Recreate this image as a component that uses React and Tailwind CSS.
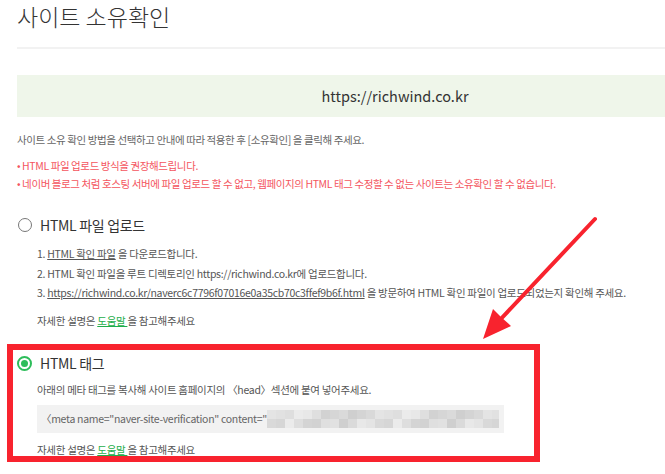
import React from 'react';

const mosaicTones = [
  'bg-[#e4e4e4]', 'bg-[#d6d6d6]', 'bg-[#dedede]', 'bg-[#cfcfcf]', 'bg-[#e8e8e8]', 'bg-[#d9d9d9]',
  'bg-[#d2d2d2]', 'bg-[#e1e1e1]', 'bg-[#dadada]', 'bg-[#ebebeb]', 'bg-[#d4d4d4]', 'bg-[#dfdfdf]',
];

function Mosaic() {
  const rows = [0, 1];
  const cols = Array.from({ length: 28 }, (_, i) => i);
  return (
    <div className="flex flex-col flex-1 min-w-0 mr-[5px] h-[18px] overflow-hidden">
      {rows.map((r) => (
        <div key={r} className="flex h-[9px]">
          {cols.map((c) => (
            <div key={c} className={`w-[9px] h-[9px] shrink-0 ${mosaicTones[(c * 7 + r * 5 + (c % 3) * r) % mosaicTones.length]}`} />
          ))}
        </div>
      ))}
    </div>
  );
}

function HelpLine() {
  return (
    <p className="text-[10.5px] text-[#555]">
      자세한 설명은 <span className="text-[#1fae4b] underline">도움말 </span>을 참고해주세요
    </p>
  );
}

function App() {
  return (
    <div className="relative w-[665px] h-[474px] overflow-hidden bg-white text-[#333] font-['Noto_Sans_CJK_KR','Noto_Sans',sans-serif]">
      <h1 className="pl-[17px] pt-[1px] text-[23px] leading-[30px] font-light text-[#333]">
        사이트 소유확인
      </h1>
      <div className="ml-[17px] mt-[16px] h-[2px] bg-[#f2f2f2]" />

      <div className="ml-[17px] mt-[26px] w-[756px] h-[42px] bg-[#eff6ea] flex items-center justify-center text-[14.5px] text-[#333]">
        https://richwind.co.kr
      </div>

      <div className="pl-[17px] mt-[15px] text-[10.5px] leading-[16px] tracking-[-0.4px]">
        <p className="text-[#666]">사이트 소유 확인 방법을 선택하고 안내에 따라 적용한 후 [소유확인] 을 클릭해 주세요.</p>
        <p className="mt-[10px] text-[#f4555e]">• HTML 파일 업로드 방식을 권장해드립니다.</p>
        <p className="mt-[2px] text-[#f4555e]">• 네이버 블로그 처럼 호스팅 서버에 파일 업로드 할 수 없고, 웹페이지의 HTML 태그 수정할 수 없는 사이트는 소유확인 할 수 없습니다.</p>
      </div>

      <div className="pl-[18px] mt-[23px] flex items-center gap-[8px] h-[20px]">
        <span className="w-[14px] h-[14px] rounded-full border-[1.5px] border-[#777]" />
        <span className="text-[14px] text-[#333] tracking-[-0.3px]">HTML 파일 업로드</span>
      </div>

      <ol className="pl-[37px] mt-[9px] text-[10.5px] leading-[19.5px] text-[#555] tracking-[-0.3px]">
        <li>1. <span className="underline">HTML 확인 파일</span> 을 다운로드합니다.</li>
        <li>2. HTML 확인 파일을 루트 디렉토리인 https://richwind.co.kr에 업로드합니다.</li>
        <li>3. <span className="underline">https://richwind.co.kr/naverc6c7796f07016e0a35cb70c3ffef9b6f.html</span> 을 방문하여 HTML 확인 파일이 업로드되었는지 확인해 주세요.</li>
      </ol>

      <div className="pl-[37px] mt-[10px] leading-[16px] tracking-[-0.3px]">
        <HelpLine />
      </div>

      <div className="ml-[7px] mt-[15px] w-[533px] h-[118px] border-[6px] border-[#f8232e] pl-[4px] pr-[28px] pt-[4px]">
        <div className="flex items-center gap-[8px] h-[20px]">
          <span className="w-[15px] h-[15px] rounded-full border-[2px] border-[#2dbd5a] flex items-center justify-center">
            <span className="w-[7px] h-[7px] rounded-full bg-[#2dbd5a]" />
          </span>
          <span className="text-[14px] text-[#333] tracking-[-0.3px]">HTML 태그</span>
        </div>
        <p className="ml-[20px] mt-[8px] text-[10.5px] leading-[16px] text-[#555] tracking-[-0.3px]">
          아래의 메타 태그를 복사해 사이트 홈페이지의 〈head〉섹션에 붙여 넣어주세요.
        </p>
        <div className="ml-[20px] mt-[7px] w-[467px] h-[28px] bg-[#f2f2f2] flex items-center pl-[4px] text-[10.5px] text-[#666] tracking-[-0.3px] overflow-hidden">
          <span className="shrink-0 whitespace-nowrap">〈meta name="naver-site-verification" content="</span>
          <Mosaic />
        </div>
        <div className="ml-[20px] mt-[10px] leading-[14px] tracking-[-0.3px]">
          <HelpLine />
        </div>
      </div>

      <svg className="absolute left-0 top-0 pointer-events-none" width="665" height="474" viewBox="0 0 665 474">
        <line x1="595" y1="219" x2="498" y2="322" stroke="#f8232e" strokeWidth="4" strokeLinecap="round" />
        <polygon points="483,339 493,309 501,317 511,326" fill="#f8232e" />
      </svg>
    </div>
  );
}

export default App;
